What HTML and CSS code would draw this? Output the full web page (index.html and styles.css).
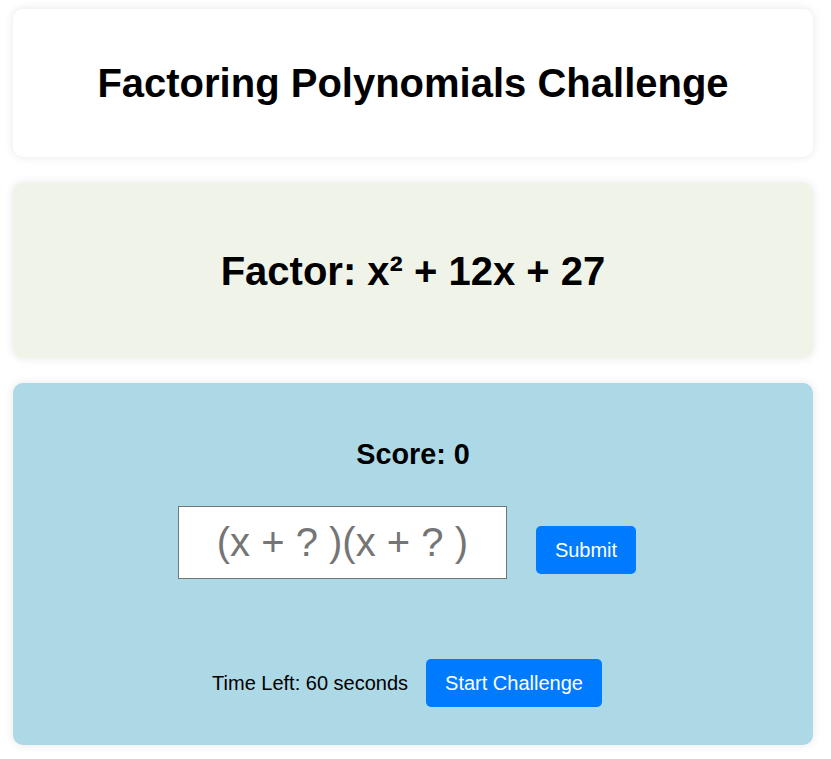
FILE: index.html
```html
<!DOCTYPE html>
<html lang="en">
<head>
<meta charset="utf-8">
<title>Factoring Polynomials Challenge</title>
<link rel="stylesheet" href="styles.css">
</head>
<body>
<main class="page">
  <section class="card card-title">
    <h1 class="title">Factoring Polynomials Challenge</h1>
  </section>
  <section class="card card-problem">
    <h2 class="problem">Factor: x² + 12x + 27</h2>
  </section>
  <section class="card card-game">
    <h3 class="score">Score: 0</h3>
    <div class="answer-row">
      <input class="answer" type="text" placeholder="(x + ? )(x + ? )">
      <button class="btn btn-submit">Submit</button>
    </div>
    <div class="timer-row">
      <span class="timer">Time Left: 60 seconds</span>
      <button class="btn">Start Challenge</button>
    </div>
  </section>
</main>
</body>
</html>
```
FILE: styles.css
```css
html, body {
  margin: 0;
  padding: 0;
  background: #ffffff;
}
body {
  font-family: "Liberation Sans", Arial, sans-serif;
  color: #000;
}
.page {
  width: 800px;
  margin: 9px 0 0 13px;
  display: flex;
  flex-direction: column;
  gap: 25px;
  padding-bottom: 14px;
}
.card {
  border-radius: 10px;
  box-shadow: 0 0 10px rgba(0, 0, 0, 0.1);
  text-align: center;
  box-sizing: border-box;
}
.card-title {
  background: #ffffff;
  height: 148px;
  margin-bottom: 1px;
  display: flex;
  align-items: center;
  justify-content: center;
}
.card-problem {
  background: #f0f4e8;
  height: 175px;
  display: flex;
  align-items: center;
  justify-content: center;
}
.title, .problem {
  margin: 0;
  font-size: 40px;
  font-weight: bold;
  line-height: 46px;
}
.card-game {
  background: #add8e6;
  height: 362px;
  padding: 38px 20px 38px;
  display: flex;
  flex-direction: column;
  align-items: center;
}
.score {
  margin: 16px 0 0;
  font-size: 28.8px;
  line-height: 34px;
  font-weight: bold;
}
.answer-row {
  margin-top: 35px;
  display: flex;
  align-items: flex-start;
  justify-content: center;
  gap: 29px;
  padding-right: 12px;
}
.answer {
  width: 329px;
  height: 73px;
  box-sizing: border-box;
  border: 1px solid #767676;
  background: #fff;
  font-family: "Liberation Sans", Arial, sans-serif;
  font-size: 40px;
  text-align: center;
  padding: 0 10px;
  margin: 0;
}
.answer::placeholder {
  color: #757575;
}
.btn {
  background: #007bff;
  color: #fff;
  border: none;
  border-radius: 5px;
  font-family: "Liberation Sans", Arial, sans-serif;
  font-size: 20px;
  line-height: 24px;
  padding: 12px 19px;
  margin: 0;
  cursor: pointer;
}
.btn-submit {
  margin-top: 20px;
}
.timer-row {
  margin-top: 80px;
  display: flex;
  align-items: center;
  justify-content: center;
  gap: 18px;
  padding-right: 12px;
}
.timer {
  font-size: 20px;
}
```
